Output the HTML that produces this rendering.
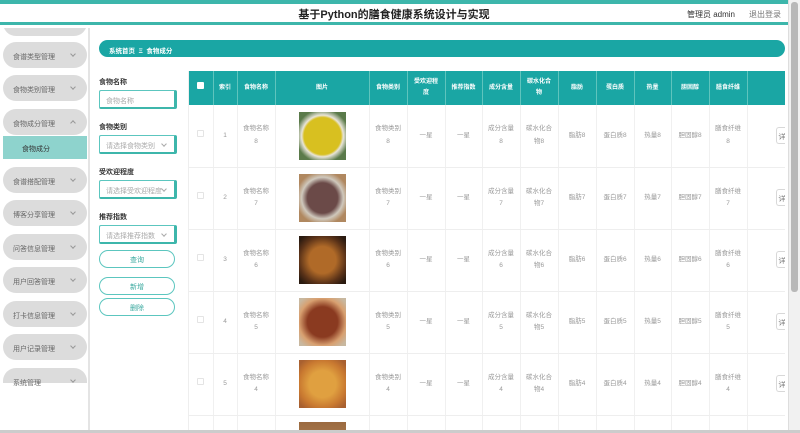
<!DOCTYPE html>
<html><head><meta charset="utf-8"><style>
*{margin:0;padding:0;box-sizing:border-box}
html,body{width:800px;height:433px;overflow:hidden}
body{background:#fff;font-family:"Liberation Sans","Noto Sans CJK SC",sans-serif;position:relative}
.topbar{position:absolute;left:0;top:0;width:788px;height:4px;background:#3db6ab}
.hdr{position:absolute;left:0;top:4px;width:788px;height:21px;background:#fff;border-bottom:3px solid #3db6ab}
.title{position:absolute;left:0;width:788px;top:6px;text-align:center;font-size:11px;font-weight:bold;color:#222}
.user{position:absolute;left:687px;top:9px;font-size:8px;color:#333}
.logout{position:absolute;left:749px;top:9px;font-size:8px;color:#777}
.side{position:absolute;left:0;top:28px;width:90px;height:402px;background:#fff;border-right:2px solid #e4e4e4;overflow:hidden}
.pill{position:absolute;left:3px;width:84px;height:26px;border-radius:13px;background:#dcdcdc;font-size:7px;color:#666;padding:10px 0 0 10px}
.pill:after{content:"";position:absolute;right:12px;top:10px;width:3px;height:3px;border-right:1px solid #999;border-bottom:1px solid #999;transform:rotate(45deg)}
.pill.up:after{transform:rotate(-135deg);top:12px}
.sub{position:absolute;left:3px;top:108px;width:84px;height:23px;background:#8ed3cd;font-size:7px;color:#333;padding:8px 0 0 19px}
.crumb{position:absolute;left:99px;top:40px;width:686px;height:17px;border-radius:9px;background:#1aa6a4;color:#fff;font-size:6.5px;font-weight:bold;padding:5px 0 0 10px}
.lbl{position:absolute;left:99px;font-size:7px;color:#333;font-weight:bold}
.inp{position:absolute;left:99px;width:78px;height:19px;border:1px solid #5cc6bf;border-right:3px solid #3db6ab;border-bottom:2px solid #3db6ab;border-radius:2px;font-size:7px;color:#aaa;padding:5px 0 0 6px}
.inp.sel:after{content:"";position:absolute;right:8px;top:6px;width:3px;height:3px;border-right:1px solid #aaa;border-bottom:1px solid #aaa;transform:rotate(45deg)}
.btn{position:absolute;left:99px;width:76px;height:18px;border:1px solid #5cc6bf;border-radius:9px;text-align:center;font-size:7px;color:#3aa99f;padding-top:4px}
.tbl{position:absolute;left:188px;top:71px;width:597px;height:359px;overflow:hidden;border-left:1px solid #eee}
table{border-collapse:collapse;table-layout:fixed;width:598px}
th{background:#1aa6a4;color:#fff;font-size:6px;height:34px;border-right:1px solid #5fc4bd;font-weight:bold;line-height:1.8}
td{height:62px;border-right:1px solid #f0f0f0;border-bottom:1px solid #eee;font-size:6.5px;color:#999;text-align:center;line-height:1.9;overflow:hidden}
.cb{display:inline-block;width:7px;height:7px;border:1px solid #e4e4e4;border-radius:1px}
th .cb{background:#fff;border:none}
.img{display:inline-block;width:47px;height:48px;vertical-align:middle}
.det{display:inline-block;margin-left:28px;width:14px;height:17px;border:1px solid #d8d8d8;border-right:none;border-radius:3px 0 0 3px;font-size:7px;color:#777;padding-top:3px;padding-left:2px}
.sb{position:absolute;left:788px;top:0;width:12px;height:433px;background:#f1f1f1;border-left:1px solid #ddd}
.sb i{position:absolute;left:2px;top:2px;width:7px;height:290px;background:#b8b8b8;border-radius:3px}
.bot{position:absolute;left:0;top:430px;width:800px;height:3px;background:#ccc}
</style></head><body>
<div class="topbar"></div>
<div class="hdr"></div>
<div class="title">基于Python的膳食健康系统设计与实现</div>
<div class="user">管理员 admin</div>
<div class="logout">退出登录</div>
<div class="side">
<div class="pill" style="top:-18px"></div>
<div class="pill" style="top:14px">食谱类型管理</div>
<div class="pill" style="top:47px">食物类别管理</div>
<div class="pill up" style="top:81px">食物成分管理</div>
<div class="sub">食物成分</div>
<div class="pill" style="top:139px">食谱搭配管理</div>
<div class="pill" style="top:172px">博客分享管理</div>
<div class="pill" style="top:206px">问答信息管理</div>
<div class="pill" style="top:239px">用户回答管理</div>
<div class="pill" style="top:273px">打卡信息管理</div>
<div class="pill" style="top:306px">用户记录管理</div>
<div class="pill" style="top:340px;height:15px;border-radius:13px 13px 0 0">系统管理</div>
</div>
<div class="crumb">系统首页 &nbsp;Ξ&nbsp; 食物成分</div>
<div class="lbl" style="top:77px">食物名称</div>
<div class="inp" style="top:90px">食物名称</div>
<div class="lbl" style="top:122px">食物类别</div>
<div class="inp sel" style="top:135px">请选择食物类别</div>
<div class="lbl" style="top:167px">受欢迎程度</div>
<div class="inp sel" style="top:180px">请选择受欢迎程度</div>
<div class="lbl" style="top:212px">推荐指数</div>
<div class="inp sel" style="top:225px">请选择推荐指数</div>
<div class="btn" style="top:250px">查询</div>
<div class="btn" style="top:277px">新增</div>
<div class="btn" style="top:298px">删除</div>
<div class="tbl"><table>
<colgroup><col style="width:24px"><col style="width:24px"><col style="width:38px"><col style="width:94px"><col style="width:38px"><col style="width:38px"><col style="width:37px"><col style="width:38px"><col style="width:38px"><col style="width:38px"><col style="width:38px"><col style="width:37px"><col style="width:38px"><col style="width:38px"><col style="width:40px"></colgroup>
<tr><th><span class="cb"></span></th><th>索引</th><th>食物名称</th><th>图片</th><th>食物类别</th><th>受欢迎程<br>度</th><th>推荐指数</th><th>成分含量</th><th>碳水化合<br>物</th><th>脂肪</th><th>蛋白质</th><th>热量</th><th>胆固醇</th><th>膳食纤维</th><th></th></tr>
<tr><td><span class="cb"></span></td><td>1</td><td>食物名称<br>8</td><td><span class="img" style="background:radial-gradient(circle,#d8c020 55%,#e8e4d8 62%,#5a7a4a 80%)"></span></td><td>食物类别<br>8</td><td>一星</td><td>一星</td><td>成分含量<br>8</td><td>碳水化合<br>物8</td><td>脂肪8</td><td>蛋白质8</td><td>热量8</td><td>胆固醇8</td><td>膳食纤维<br>8</td><td style="text-align:left"><span class="det">详</span></td></tr>
<tr><td><span class="cb"></span></td><td>2</td><td>食物名称<br>7</td><td><span class="img" style="background:radial-gradient(circle,#6b4a48 45%,#cfc8bc 62%,#b08860 80%)"></span></td><td>食物类别<br>7</td><td>一星</td><td>一星</td><td>成分含量<br>7</td><td>碳水化合<br>物7</td><td>脂肪7</td><td>蛋白质7</td><td>热量7</td><td>胆固醇7</td><td>膳食纤维<br>7</td><td style="text-align:left"><span class="det">详</span></td></tr>
<tr><td><span class="cb"></span></td><td>3</td><td>食物名称<br>6</td><td><span class="img" style="background:radial-gradient(circle,#b06a28 40%,#5a3218 70%,#2a1a10 90%)"></span></td><td>食物类别<br>6</td><td>一星</td><td>一星</td><td>成分含量<br>6</td><td>碳水化合<br>物6</td><td>脂肪6</td><td>蛋白质6</td><td>热量6</td><td>胆固醇6</td><td>膳食纤维<br>6</td><td style="text-align:left"><span class="det">详</span></td></tr>
<tr><td><span class="cb"></span></td><td>4</td><td>食物名称<br>5</td><td><span class="img" style="background:radial-gradient(circle,#8a3a20 45%,#d8a070 70%,#c8b8a0 90%)"></span></td><td>食物类别<br>5</td><td>一星</td><td>一星</td><td>成分含量<br>5</td><td>碳水化合<br>物5</td><td>脂肪5</td><td>蛋白质5</td><td>热量5</td><td>胆固醇5</td><td>膳食纤维<br>5</td><td style="text-align:left"><span class="det">详</span></td></tr>
<tr><td><span class="cb"></span></td><td>5</td><td>食物名称<br>4</td><td><span class="img" style="background:radial-gradient(circle,#e0a040 40%,#c87830 70%,#a86030 90%)"></span></td><td>食物类别<br>4</td><td>一星</td><td>一星</td><td>成分含量<br>4</td><td>碳水化合<br>物4</td><td>脂肪4</td><td>蛋白质4</td><td>热量4</td><td>胆固醇4</td><td>膳食纤维<br>4</td><td style="text-align:left"><span class="det">详</span></td></tr>
<tr><td></td><td></td><td></td><td style="vertical-align:top;padding-top:6px"><span class="img" style="background:linear-gradient(#9a6a40,#c89060)"></span></td><td></td><td></td><td></td><td></td><td></td><td></td><td></td><td></td><td></td><td></td><td></td></tr>
</table></div>
<div class="sb"><i></i></div>
<div class="bot"></div>
</body></html>
